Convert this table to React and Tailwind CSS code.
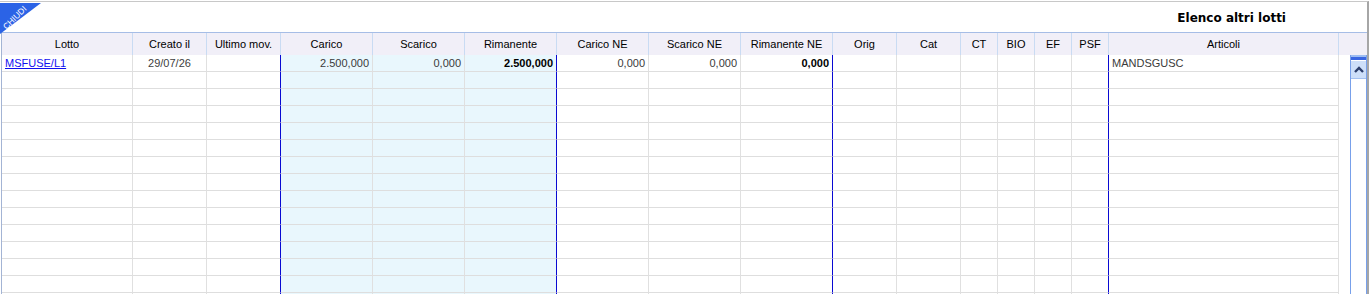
import React from 'react';

const columns = [
    { key: 'lotto', label: 'Lotto', w: 'w-[131px]' },
    { key: 'creato', label: 'Creato il', w: 'w-[74px]' },
    { key: 'ultimo', label: 'Ultimo mov.', w: 'w-[74px]', blue: true },
    { key: 'carico', label: 'Carico', w: 'w-[92px]', tint: true },
    { key: 'scarico', label: 'Scarico', w: 'w-[92px]', tint: true },
    { key: 'rimanente', label: 'Rimanente', w: 'w-[92px]', tint: true, blue: true },
    { key: 'caricoNe', label: 'Carico NE', w: 'w-[92px]' },
    { key: 'scaricoNe', label: 'Scarico NE', w: 'w-[92px]' },
    { key: 'rimanenteNe', label: 'Rimanente NE', w: 'w-[92px]', blue: true },
    { key: 'orig', label: 'Orig', w: 'w-[64px]' },
    { key: 'cat', label: 'Cat', w: 'w-[64px]' },
    { key: 'ct', label: 'CT', w: 'w-[37px]' },
    { key: 'bio', label: 'BIO', w: 'w-[37px]' },
    { key: 'ef', label: 'EF', w: 'w-[37px]' },
    { key: 'psf', label: 'PSF', w: 'w-[37px]', blue: true },
    { key: 'articoli', label: 'Articoli', w: 'w-[230px]' },
];

const firstRow = {
    lotto: { text: 'MSFUSE/L1', cls: 'text-left pl-[3px] text-[#1010f0] underline' },
    creato: { text: '29/07/26', cls: 'text-center text-[#404040]' },
    carico: { text: '2.500,000', cls: 'text-right pr-[3px] text-[#3a3a3a]' },
    scarico: { text: '0,000', cls: 'text-right pr-[3px] text-[#3a3a3a]' },
    rimanente: { text: '2.500,000', cls: 'text-right pr-[3px] font-bold text-black' },
    caricoNe: { text: '0,000', cls: 'text-right pr-[3px] text-[#3a3a3a]' },
    scaricoNe: { text: '0,000', cls: 'text-right pr-[3px] text-[#3a3a3a]' },
    rimanenteNe: { text: '0,000', cls: 'text-right pr-[3px] font-bold text-black' },
    articoli: { text: 'MANDSGUSC', cls: 'text-left pl-[3px] text-[#3a3a3a]' },
};

const ROWS = 15;

const App = () => {
    return (
        <div className="w-[1370px] h-[294px] overflow-hidden bg-white font-['Liberation_Sans',Arial,sans-serif] text-[11px] leading-none">
            <div className="relative mt-px w-[1369px] border-t border-r-2 border-t-[#c8c8c8] border-r-[#a6a6a6]">
                {/* chiudi corner */}
                <svg className="absolute left-0 top-px" width="42" height="31" viewBox="0 0 42 31">
                    <polygon points="0,0 41,0 0,31" fill="#2b63e6" />
                    <text
                        x="15"
                        y="17.5"
                        fill="#ffffff"
                        fontSize="8.5"
                        fontFamily="Liberation Sans, Arial, sans-serif"
                        textAnchor="middle"
                        transform="rotate(-45 15 15)"
                    >
                        CHIUDI
                    </text>
                </svg>

                {/* title */}
                <div className="h-[30px] flex items-center justify-end pr-[81px]">
                    <span className="font-['DejaVu_Sans',sans-serif] font-bold text-[12px] text-black pt-[2px]">
                        Elenco altri lotti
                    </span>
                </div>

                {/* table */}
                <div className="ml-px border-l border-[#a3b4d4]">
                    {/* header */}
                    <div className="flex h-[23px] border-t border-[#a6bde6] bg-[#f1eff8]">
                        {columns.map((c) => (
                            <div
                                key={c.key}
                                className={`${c.w} shrink-0 border-r border-[#c9dbf3] flex items-center justify-center text-black`}
                            >
                                {c.label}
                            </div>
                        ))}
                        <div className="flex-1"></div>
                    </div>

                    {/* body */}
                    <div className="flex">
                        <div className="w-[1337px] shrink-0">
                            {Array.from({ length: ROWS }).map((_, i) => (
                                <div key={i} className="flex h-[17px]">
                                    {columns.map((c) => {
                                        const cell = i === 0 ? firstRow[c.key] : null;
                                        return (
                                            <div
                                                key={c.key}
                                                className={`${c.w} shrink-0 border-b border-b-[#dedede] border-r ${c.blue ? 'border-r-[#0a0ad2]' : 'border-r-[#e0e0e0]'} ${c.tint ? 'bg-[#e9f7fd]' : 'bg-white'} flex items-center`}
                                            >
                                                {cell && (
                                                    <span className={`w-full whitespace-nowrap ${cell.cls}`}>{cell.text}</span>
                                                )}
                                            </div>
                                        );
                                    })}
                                </div>
                            ))}
                        </div>
                        <div className="w-[11px] shrink-0"></div>

                        {/* scrollbar */}
                        <div className="w-[17px] h-[240px] shrink-0 border-x border-[#78a0ea] bg-white">
                            <div className="h-[2px] bg-[#9dbdf2]"></div>
                            <div className="h-[3px] bg-[#3a66e2]"></div>
                            <div className="h-px bg-white"></div>
                            <div className="h-[18px] bg-[#cddff9] border-b border-[#a3c0f0] flex items-center justify-center">
                                <svg width="10" height="7" viewBox="0 0 10 7">
                                    <polyline points="1,6 5,2 9,6" fill="none" stroke="#2d3f6c" strokeWidth="2.4" />
                                </svg>
                            </div>
                        </div>
                    </div>
                </div>
            </div>
        </div>
    );
};

export default App;
